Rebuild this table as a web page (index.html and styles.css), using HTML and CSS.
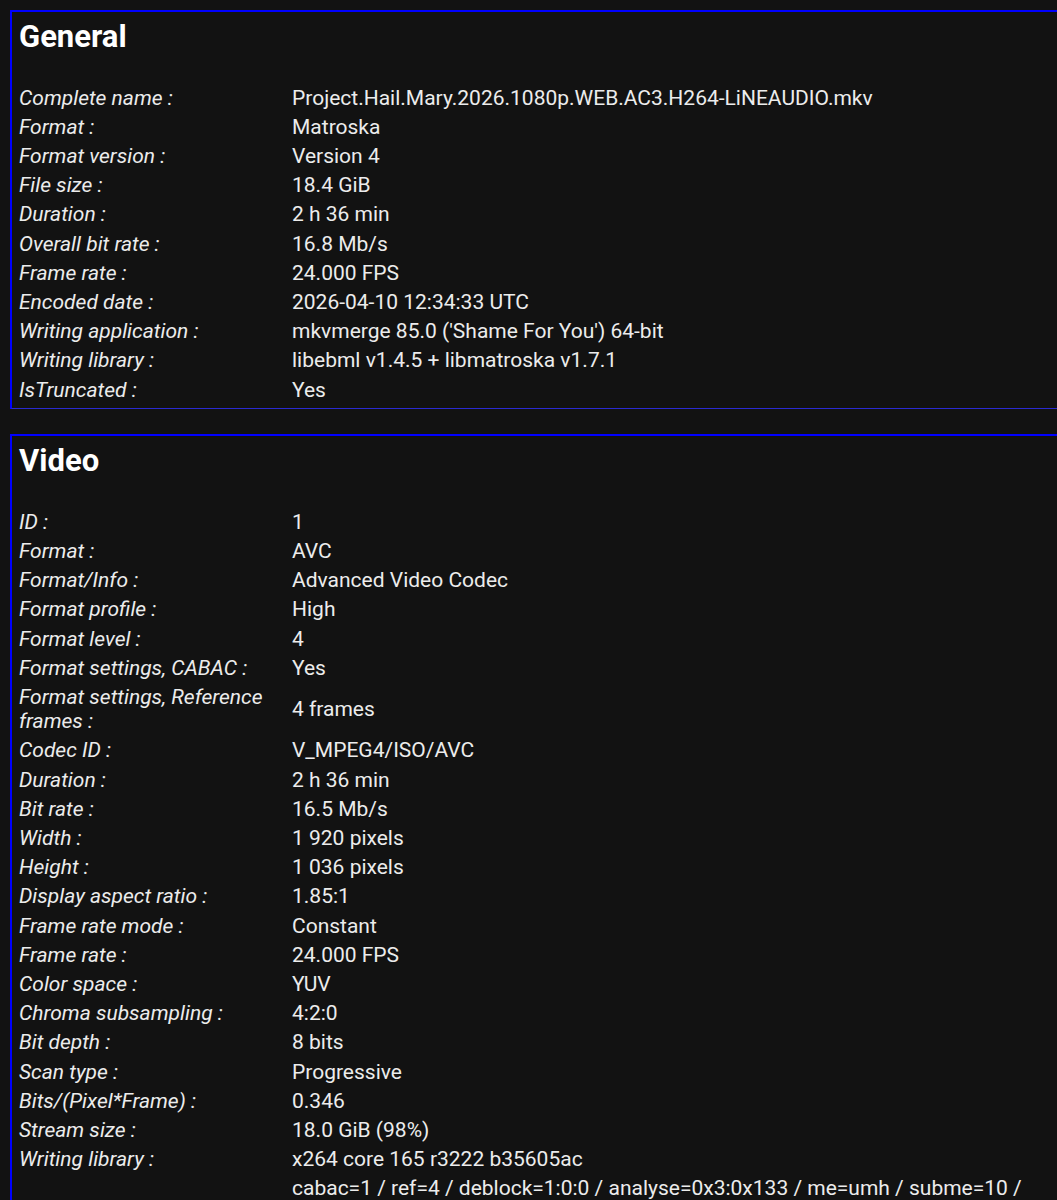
FILE: index.html
```html
<!DOCTYPE html>
<html lang="en">
<head>
    <meta charset="UTF-8">
    <meta name="viewport" content="width=device-width, initial-scale=1.0">
    <title>MediaInfo - Project.Hail.Mary.2026.1080p.WEB.AC3.H264-LiNEAUDIO.mkv</title>
    <link rel="stylesheet" href="styles.css">
</head>
<body>

    <div class="track">
        <h2>General</h2>
        <table class="info">
            <tr><td class="key">Complete name :</td><td>Project.Hail.Mary.2026.1080p.WEB.AC3.H264-LiNEAUDIO.mkv</td></tr>
            <tr><td class="key">Format :</td><td>Matroska</td></tr>
            <tr><td class="key">Format version :</td><td>Version 4</td></tr>
            <tr><td class="key">File size :</td><td>18.4 GiB</td></tr>
            <tr><td class="key">Duration :</td><td>2 h 36 min</td></tr>
            <tr><td class="key">Overall bit rate :</td><td>16.8 Mb/s</td></tr>
            <tr><td class="key">Frame rate :</td><td>24.000 FPS</td></tr>
            <tr><td class="key">Encoded date :</td><td>2026-04-10 12:34:33 UTC</td></tr>
            <tr><td class="key">Writing application :</td><td>mkvmerge 85.0 ('Shame For You') 64-bit</td></tr>
            <tr><td class="key">Writing library :</td><td>libebml v1.4.5 + libmatroska v1.7.1</td></tr>
            <tr><td class="key">IsTruncated :</td><td>Yes</td></tr>
        </table>
    </div>

    <div class="track">
        <h2>Video</h2>
        <table class="info">
            <tr><td class="key">ID :</td><td>1</td></tr>
            <tr><td class="key">Format :</td><td>AVC</td></tr>
            <tr><td class="key">Format/Info :</td><td>Advanced Video Codec</td></tr>
            <tr><td class="key">Format profile :</td><td>High</td></tr>
            <tr><td class="key">Format level :</td><td>4</td></tr>
            <tr><td class="key">Format settings, CABAC :</td><td>Yes</td></tr>
            <tr><td class="key">Format settings, Reference frames :</td><td>4 frames</td></tr>
            <tr><td class="key">Codec ID :</td><td>V_MPEG4/ISO/AVC</td></tr>
            <tr><td class="key">Duration :</td><td>2 h 36 min</td></tr>
            <tr><td class="key">Bit rate :</td><td>16.5 Mb/s</td></tr>
            <tr><td class="key">Width :</td><td>1 920 pixels</td></tr>
            <tr><td class="key">Height :</td><td>1 036 pixels</td></tr>
            <tr><td class="key">Display aspect ratio :</td><td>1.85:1</td></tr>
            <tr><td class="key">Frame rate mode :</td><td>Constant</td></tr>
            <tr><td class="key">Frame rate :</td><td>24.000 FPS</td></tr>
            <tr><td class="key">Color space :</td><td>YUV</td></tr>
            <tr><td class="key">Chroma subsampling :</td><td>4:2:0</td></tr>
            <tr><td class="key">Bit depth :</td><td>8 bits</td></tr>
            <tr><td class="key">Scan type :</td><td>Progressive</td></tr>
            <tr><td class="key">Bits/(Pixel*Frame) :</td><td>0.346</td></tr>
            <tr><td class="key">Stream size :</td><td>18.0 GiB (98%)</td></tr>
            <tr><td class="key">Writing library :</td><td>x264 core 165 r3222 b35605ac</td></tr>
            <tr><td class="key">Encoding settings :</td><td>cabac=1 / ref=4 / deblock=1:0:0 / analyse=0x3:0x133 / me=umh / subme=10 / psy=1 / psy_rd=1.00:0.00 / mixed_ref=1 / me_range=24 / chroma_me=1 / trellis=2 / 8x8dct=1 / cqm=0 / deadzone=21,11 / fast_pskip=1 / chroma_qp_offset=-2 / threads=12 / lookahead_threads=2 / sliced_threads=0 / nr=0 / decimate=1 / interlaced=0 / bluray_compat=0 / constrained_intra=0 / bframes=8 / b_pyramid=2 / b_adapt=2 / b_bias=0 / direct=3 / weightb=1 / open_gop=0 / weightp=2 / keyint=250 / keyint_min=24 / scenecut=40 / intra_refresh=0 / rc_lookahead=60 / rc=crf / mbtree=1 / crf=18.0 / qcomp=0.60 / qpmin=0 / qpmax=69 / qpstep=4 / ip_ratio=1.40 / aq=1:1.00</td></tr>
            <tr><td class="key">Language :</td><td>English</td></tr>
            <tr><td class="key">Default :</td><td>Yes</td></tr>
            <tr><td class="key">Forced :</td><td>No</td></tr>
        </table>
    </div>

</body>
</html>
```

FILE: styles.css
```css
body {
    font-family: Roboto, "Liberation Sans", Arial, sans-serif;
    background-color: #121212;
    color: #ececec;
    margin: 10px 0 0 10px;
}
.track {
    border-top: 2px solid #0000ff;
    border-left: 2px solid #0000ff;
    border-bottom: 1px solid #2a2ad0;
    padding: 6px 0 3px 3px;
    margin-bottom: 25px;
}
h2 {
    font-size: 31px;
    font-weight: bold;
    color: #ffffff;
    margin: 0 0 27px 4px;
}
.info {
    border-spacing: 2px;
    font-size: 21px;
    line-height: 24.2px;
}
.info td {
    padding: 1.5px 2px;
    vertical-align: middle;
}
.info .key {
    font-style: italic;
    width: 267px;
}
```
